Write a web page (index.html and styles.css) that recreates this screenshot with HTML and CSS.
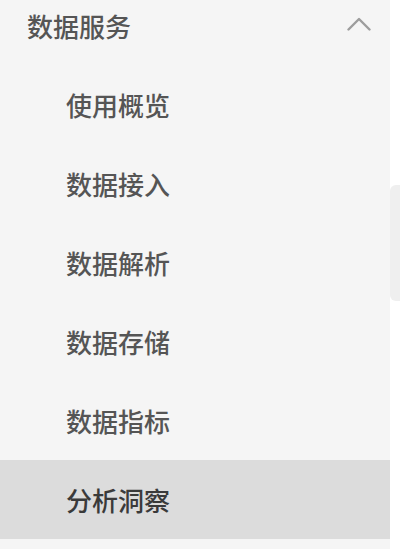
FILE: index.html
```html
<!DOCTYPE html>
<html lang="zh-CN">
<head>
<meta charset="utf-8">
<title>数据服务</title>
<link rel="stylesheet" href="styles.css">
</head>
<body>
<div class="page">
  <nav class="menu">
    <div class="menu-head">
      <span class="menu-title">数据服务</span>
      <svg class="chevron" width="24" height="14" viewBox="0 0 24 14" aria-hidden="true">
        <path d="M1.5 12.5 L12 2 L22.5 12.5" fill="none" stroke="#9d9d9d" stroke-width="2.4" stroke-linecap="round" stroke-linejoin="round"/>
      </svg>
    </div>
    <ul class="menu-list">
      <li class="menu-item">使用概览</li>
      <li class="menu-item">数据接入</li>
      <li class="menu-item">数据解析</li>
      <li class="menu-item">数据存储</li>
      <li class="menu-item">数据指标</li>
      <li class="menu-item is-active">分析洞察</li>
    </ul>
  </nav>
  <div class="side">
    <div class="side-tab"></div>
  </div>
</div>
</body>
</html>
```

FILE: styles.css
```css
html, body {
  margin: 0;
  padding: 0;
  background: #ffffff;
}

.page {
  display: flex;
  width: 400px;
  height: 549px;
  overflow: hidden;
  font-family: "Noto Sans CJK SC", "Noto Sans", sans-serif;
}

.menu {
  width: 390px;
  flex: none;
  background: #f5f5f5;
  display: flex;
  flex-direction: column;
}

.menu-head {
  height: 52px;
  margin-bottom: 13px;
  display: flex;
  align-items: center;
  justify-content: space-between;
  padding: 0 18px 0 27px;
}

.menu-title {
  font-size: 26px;
  font-weight: 500;
  color: #555555;
  line-height: 1;
}

.chevron {
  display: block;
  margin-right: 1px;
  margin-bottom: 4px;
}

.menu-list {
  list-style: none;
  margin: 0;
  padding: 0;
}

.menu-item {
  height: 79px;
  display: flex;
  align-items: center;
  padding-left: 66px;
  font-size: 26px;
  font-weight: 500;
  color: #555555;
  line-height: 1;
}

.menu-item.is-active {
  background: #dcdcdc;
  color: #3a3a3a;
}

.side {
  flex: 1;
  background: #ffffff;
  padding-top: 185px;
}

.side-tab {
  height: 116px;
  background: #efefef;
  border-radius: 6px 0 0 6px;
}
```
